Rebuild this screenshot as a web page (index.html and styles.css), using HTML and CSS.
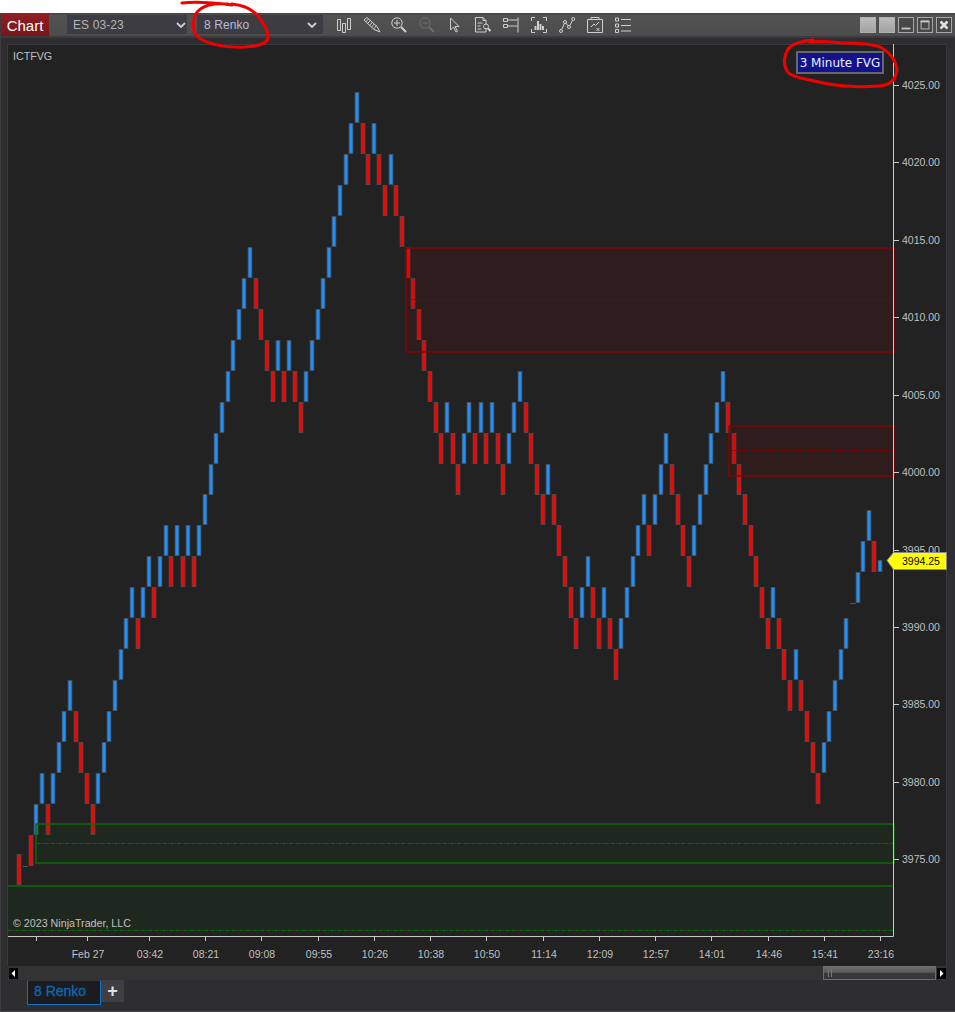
FILE: index.html
```html
<!DOCTYPE html>
<html lang="en">
<head>
<meta charset="utf-8">
<title>Chart</title>
<link rel="stylesheet" href="styles.css">
</head>
<body>
<div class="page">
  <div class="window">
    <header class="toolbar">
      <div class="title">Chart</div>
      <div class="combo combo-instrument"><span>ES 03-23</span><svg class="chev" viewBox="0 0 10 6"><path d="M1 1l4 4 4-4"/></svg></div>
      <div class="combo combo-period"><span>8 Renko</span><svg class="chev" viewBox="0 0 10 6"><path d="M1 1l4 4 4-4"/></svg></div>
      <div class="tools">
        <svg class="tool" viewBox="0 0 16 16"><path d="M1.500 2.500h3v11h-3zM6.500 6.500h3v9h-3zM11.500 1.500h3v11h-3z"/></svg>
        <svg class="tool tool-wide" viewBox="0 0 18 16"><path d="M1 3l3-2.500 10 9 3 5.500-6-2.500zM2.500 5l3-3M4.500 6.500l3-3M6.500 8.300l3-3M8.500 10l3-3M10.500 11.800l3-3"/></svg>
        <svg class="tool" viewBox="0 0 16 16"><circle cx="6" cy="6" r="5.200"/><path d="M6 3v6M3 6h6"/><path class="thick" d="M10 10l5 5"/></svg>
        <svg class="tool dim" viewBox="0 0 16 16"><circle cx="6" cy="6" r="5.200"/><path d="M3 6h6"/><path class="thick" d="M10 10l5 5"/></svg>
        <svg class="tool" viewBox="0 0 16 16"><path d="M3.500 1v12l3-3 2.500 5 1.500-.8-2.500-4.700h4z"/></svg>
        <svg class="tool" viewBox="0 0 16 16"><path d="M11 11v4H.5V.5H8l3 3V7M8 .5v3h3M2.500 6h5M2.500 9h3M2.500 12h4"/><circle cx="11" cy="9.500" r="2.500"/><path class="thick" d="M13 11.500l2.500 2.500"/></svg>
        <svg class="tool" viewBox="0 0 16 16"><path d="M.5 1.500h4v3h-4zM.5 7.500h4v3h-4zM4.500 3h10M4.500 9h10M15 .5v15"/></svg>
        <svg class="tool" viewBox="0 0 16 16"><path d="M.5 4V.5H4M12 .5h3.500V4M.5 12v3.500H4M12 15.500h3.500V12"/><path class="thick" d="M4.500 13V9M7 13V4M9.500 13V7M12 13V9"/></svg>
        <svg class="tool" viewBox="0 0 16 16"><circle cx="2" cy="14" r="1.500"/><circle cx="6" cy="5" r="1.500"/><circle cx="10" cy="10" r="1.500"/><circle cx="14.200" cy="2" r="1.500"/><path d="M2.700 12.600l2.700-6.200M7 6.200l2.200 2.600M10.800 8.700l2.700-5.300"/></svg>
        <svg class="tool" viewBox="0 0 16 16"><path d="M.5 2.500h15v13H.5zM4 2.500V.5h8v2M4 10l3-3 1.500 1.500L12 5M9.500 11l3 3M12.500 11l-3 3"/></svg>
        <svg class="tool" viewBox="0 0 16 16"><path d="M.5 1h3v3h-3zM.5 7h3v3h-3zM.5 12.500h3v3h-3zM6 2.500h10M6 8.500h10M6 14h10"/></svg>
      </div>
      <div class="win-buttons">
        <div class="win-btn win-blank"></div>
        <div class="win-btn win-blank"></div>
        <div class="win-btn"><svg viewBox="0 0 16 16"><path class="solid" d="M3 11h10v2H3z"/></svg></div>
        <div class="win-btn"><svg viewBox="0 0 16 16"><path class="line" d="M3.500 3.500h9v9h-9z"/><path class="solid" d="M3 3h10v2H3z"/></svg></div>
        <div class="win-btn"><svg viewBox="0 0 16 16"><path class="cross" d="M4 4l8 8M12 4l-8 8"/></svg></div>
      </div>
    </header>

    <main class="panel">
      <div class="chart">
        <svg class="plot" viewBox="8 44 939 922" width="939" height="922">
          <g id="bars"></g>

          <rect class="zone red" x="406" y="248" width="488" height="104"/>
          <path class="mid red" d="M407 299.500H893"/>
          <rect class="zone red" x="729" y="426" width="165" height="50"/>
          <path class="mid red" d="M730 450.500H893"/>
          <rect class="zone green" x="36" y="824" width="858" height="39"/>
          <path class="mid green" d="M37 843.500H893"/>
          <rect class="zone-fill green" x="8" y="886" width="885" height="44"/>
          <path class="edge green" d="M8 886H893"/>
          <path class="mid green" d="M8 930.500H893"/>

          <text class="label" x="13" y="60">ICTFVG</text>
          <text class="label" x="13" y="927">© 2023 NinjaTrader, LLC</text>

          <path class="axis" d="M893.500 44V936.500H8"/>
          <g class="ticks">
            <path d="M894 85.500h5M894 162.500h5M894 240.500h5M894 317.500h5M894 395.500h5M894 472.500h5M894 550.500h5M894 627.500h5M894 704.500h5M894 782.500h5M894 859.500h5"/>
            <path d="M36.500 937v4M87.500 937v4M149.500 937v4M205.500 937v4M261.500 937v4M318.500 937v4M374.500 937v4M430.500 937v4M486.500 937v4M543.500 937v4M599.500 937v4M655.500 937v4M711.500 937v4M768.500 937v4M824.500 937v4M880.500 937v4"/>
          </g>
          <g class="price-labels">
            <text x="902" y="89">4025.00</text>
            <text x="902" y="166">4020.00</text>
            <text x="902" y="244">4015.00</text>
            <text x="902" y="321">4010.00</text>
            <text x="902" y="399">4005.00</text>
            <text x="902" y="476">4000.00</text>
            <text x="902" y="554">3995.00</text>
            <text x="902" y="631">3990.00</text>
            <text x="902" y="708">3985.00</text>
            <text x="902" y="786">3980.00</text>
            <text x="902" y="863">3975.00</text>
          </g>
          <g class="time-labels">
            <text x="88" y="958">Feb 27</text>
            <text x="150" y="958">03:42</text>
            <text x="206" y="958">08:21</text>
            <text x="262" y="958">09:08</text>
            <text x="319" y="958">09:55</text>
            <text x="375" y="958">10:26</text>
            <text x="431" y="958">10:38</text>
            <text x="487" y="958">10:50</text>
            <text x="544" y="958">11:14</text>
            <text x="600" y="958">12:09</text>
            <text x="656" y="958">12:57</text>
            <text x="712" y="958">14:01</text>
            <text x="769" y="958">14:46</text>
            <text x="825" y="958">15:41</text>
            <text x="881" y="958">23:16</text>
          </g>
          <polygon class="marker" points="887,560.500 893.500,552.500 946.500,552.500 946.500,569.500 893.500,569.500"/>
          <text class="marker-text" x="902" y="565">3994.25</text>
        </svg>
        <div class="fvg-label">3 Minute FVG</div>
      </div>
      <div class="scrollbar">
        <div class="scroll-btn"><svg viewBox="0 0 9 11"><path d="M6 2v7L2.500 5.500z"/></svg></div>
        <div class="scroll-track"><div class="scroll-thumb"><span></span><span></span></div></div>
        <div class="scroll-btn"><svg viewBox="0 0 9 11"><path d="M3 2v7l3.500-3.500z"/></svg></div>
      </div>
    </main>

    <nav class="tabs">
      <div class="tab">8 Renko</div>
      <div class="tab-add">+</div>
    </nav>
  </div>

  <svg class="scribble" viewBox="0 0 955 1012" width="955" height="1012">
    <path d="M182 3C198 1 216 3 232 5M228 4C212 3 204 5 197 12C192 20 192 30 197 36C205 44 225 48 245 47C258 46 267 44 268 38C268 28 262 22 258 16C252 9 242 5 232 4"/>
    <path d="M810 42C825 40 835 43 843 43C860 43 875 44 882 48C892 54 896 62 897 70C896 78 892 83 885 85C875 87 860 87 845 86C830 85 818 82 810 80C800 78 790 76 787 71C783 64 784 55 788 49C793 43 802 41 813 40"/>
  </svg>
</div>
<script src="chart.js"></script>
</body>
</html>
```
FILE: styles.css
```css
html, body {
  margin: 0;
  padding: 0;
  background: #fff;
}

.page {
  position: relative;
  width: 955px;
  height: 1012px;
  padding-top: 13px;
  box-sizing: border-box;
  overflow: hidden;
  font-family: "Liberation Sans", Arial, sans-serif;
}

.window {
  height: 999px;
  display: flex;
  flex-direction: column;
  background: #2e2e30;
  border-left: 1px solid #3d3d3f;
  border-bottom: 1px solid #454547;
  box-sizing: border-box;
}

/* toolbar */
.toolbar {
  height: 25px;
  flex: none;
  display: flex;
  align-items: center;
  background: linear-gradient(#3f3f3f 0, #525252 2px, #4c4c4c 100%);
  border-bottom: 2px solid #3b3b3d;
  box-sizing: border-box;
}

.title {
  width: 48px;
  height: 22px;
  line-height: 23px;
  text-align: center;
  color: #fff;
  font-size: 15px;
  background: linear-gradient(#8d1e24, #7a1519);
}

.combo {
  height: 19px;
  display: flex;
  align-items: center;
  justify-content: space-between;
  box-sizing: border-box;
  background: #3c3c42;
  color: #b4b4b4;
  font-size: 12px;
  letter-spacing: .1px;
}

.combo-instrument {
  width: 120px;
  margin-left: 18px;
  padding: 0 1px 0 6px;
}

.combo-period {
  width: 126px;
  margin-left: 10px;
  padding: 0 6px 0 7px;
  color: #b9bcd6;
}

.chev {
  width: 10px;
  height: 6px;
  fill: none;
  stroke: #d0d0d0;
  stroke-width: 1.800;
}

.tools {
  display: flex;
  align-items: center;
  margin-left: 13px;
  gap: 12px;
}

.tool {
  width: 16px;
  height: 16px;
  fill: none;
  stroke: #cfcfcf;
  stroke-width: 1;
  flex: none;
}

.tool-wide {
  width: 18px;
  margin: 0 -2px 0 -1px;
}

.tool .thick {
  stroke-width: 2;
}

.tool.dim {
  stroke: #6c6c6c;
}

.win-buttons {
  display: flex;
  gap: 3px;
  margin-left: auto;
  margin-right: 3px;
}

.win-btn {
  width: 16px;
  height: 16px;
  box-sizing: border-box;
  border: 1px solid #a8a8a8;
  background: #484848;
}

.win-btn svg {
  display: block;
  width: 14px;
  height: 14px;
}

.win-blank {
  background: linear-gradient(#bcbcbc, #a2a2a2);
  border-color: #b0b0b0;
}

.solid { fill: #c8c8c8; }
.line { fill: none; stroke: #c8c8c8; stroke-width: 1; }
.cross { fill: none; stroke: #e0e0e0; stroke-width: 3; }

/* chart */
.panel {
  flex: none;
  padding: 6px 8px 0 7px;
}

.chart {
  position: relative;
  height: 922px;
  background: #222;
  box-shadow: inset 0 1px #3a3a3e, inset -1px 0 #3a3a3e, -1px 0 #3a3a3e;
}

.plot {
  display: block;
}

.zone { stroke-width: 1.500; }
.zone.red { fill: rgba(139, 0, 0, .13); stroke: #850303; }
.zone.green { fill: rgba(0, 100, 0, .1); stroke: #0a6a0a; }
.zone-fill.green { fill: rgba(0, 100, 0, .1); }
.edge.green { stroke: #0a6a0a; stroke-width: 1.500; fill: none; }
.mid { fill: none; stroke-width: 1; stroke-dasharray: 4 1 1 1; }
.mid.red { stroke: #7a0404; }
.mid.green { stroke: #0a6a0a; }

.bar { stroke: #505050; stroke-width: .8; }
.bar-up { fill: #1e90ff; }
.bar-down { fill: #f00; }
.doji { stroke: #555; stroke-width: 1; fill: none; }

.axis { fill: none; stroke: #c8c8c8; stroke-width: 1; }
.ticks path { fill: none; stroke: #c8c8c8; stroke-width: 1; }

.label,
.price-labels text,
.time-labels text {
  font-family: "Liberation Sans", Arial, sans-serif;
  font-size: 10.500px;
  fill: #c0c0c0;
}

.label {
  font-size: 10.700px;
}

.time-labels text {
  text-anchor: middle;
}

.marker {
  fill: #ff0;
  stroke: #8a8a8a;
  stroke-width: 1;
}

.marker-text {
  font-family: "Liberation Sans", Arial, sans-serif;
  font-size: 10.500px;
  fill: #000;
}

.fvg-label {
  position: absolute;
  left: 788px;
  top: 7px;
  width: 88px;
  height: 23px;
  box-sizing: border-box;
  border: 2px solid #666;
  background: #12128c;
  color: #ecedfa;
  font-family: "DejaVu Sans", sans-serif;
  font-size: 12px;
  line-height: 21px;
  text-align: center;
  white-space: nowrap;
}

/* scrollbar */
.scrollbar {
  height: 14px;
  display: flex;
  align-items: stretch;
  background: #333;
  box-sizing: border-box;
  padding: 2px 1px 1px;
}

.scroll-btn {
  width: 9px;
  flex: none;
  background: #000;
}

.scroll-btn svg {
  display: block;
  width: 9px;
  height: 11px;
  fill: #fff;
}

.scroll-track {
  flex: 1;
  display: flex;
  justify-content: flex-end;
  margin-top: -2px;
  margin-bottom: -1px;
}

.scroll-thumb {
  width: 113px;
  box-sizing: border-box;
  border: 1px solid #6e6e6e;
  background: linear-gradient(#6a6a6a, #5a5a5a 45%, #3a3a3a 50%, #353535);
  display: flex;
  align-items: center;
  gap: 2px;
  padding-left: 4px;
  margin-right: 1px;
}

.scroll-thumb span {
  width: 1px;
  height: 8px;
  background: #777;
}

/* tabs */
.tabs {
  display: flex;
  align-items: flex-start;
  padding-left: 26px;
  flex: none;
}

.tab {
  width: 74px;
  height: 25px;
  box-sizing: border-box;
  border: 1px solid #0a74cc;
  border-top-color: #333;
  background: #1c1c1e;
  color: #0a69ba;
  font-size: 14px;
  font-weight: 400;
  -webkit-text-stroke: .3px #0a69ba;
  line-height: 21px;
  padding-left: 6px;
}

.tab-add {
  width: 23px;
  height: 22px;
  background: #3e3e44;
  color: #e0e0e0;
  font-size: 18px;
  font-weight: 700;
  line-height: 22px;
  text-align: center;
}

/* red hand drawn marks */
.scribble {
  position: absolute;
  left: 0;
  top: 0;
  pointer-events: none;
  fill: none;
  stroke: #f20000;
  stroke-width: 3;
  stroke-linecap: round;
}
```
FILE: chart.js
```js
(function () {
  var NS = 'http://www.w3.org/2000/svg';
  var group = document.getElementById('bars');
  var BRICK = 31;

  // index 2 onward: u/d + brick level, each bar sits one slot to the right
  var SERIES = 'd24 u23 u22 d23 u22 u21 u20 u19 d20 d21 d22 d23 u22 u21 u20 u19 u18 u17 u16 d17 u16 u15 d16 u15 u14 d15 u14 d15 u14 d15 u14 u13 u12 u11 u10 u9 u8 u7 u6 u5 d6 d7 d8 d9 u8 d9 u8 d9 d10 u9 u8 u7 u6 u5 u4 u3 u2 u1 u0 d1 d2 u1 d2 d3 u2 d3 d4 d5 d6 d7 d8 d9 d10 d11 u10 d11 d12 u11 u10 d11 u10 d11 u10 d11 d12 u11 u10 u9 d10 d11 d12 d13 u12 d13 d14 d15 d16 d17 u16 u15 d16 d17 u16 d17 d18 u17 u16 u15 u14 u13 d14 u13 u12 u11 d12 d13 d14 d15 u14 u13 u12 u11 u10 u9 d10 d11 d12 d13 d14 d15 d16 d17 u16 d17 d18 d19 u18 d19 d20 d21 d22 u21 u20 u19 u18 u17'.split(' ');

  function slotX(i) {
    return Math.floor(19.99 + 5.625 * i);
  }

  function levelY(k) {
    return Math.round(92 + 30.96 * k);
  }

  // fill 3px wide, centred, with a soft grey edge either side
  function addBar(i, up, top, height) {
    var r = document.createElementNS(NS, 'rect');
    r.setAttribute('class', 'bar ' + (up ? 'bar-up' : 'bar-down'));
    r.setAttribute('x', slotX(i) - 1.9);
    r.setAttribute('y', top + 0.4);
    r.setAttribute('width', 3.8);
    r.setAttribute('height', height - 0.8);
    group.appendChild(r);
  }

  function addDoji(x1, x2, y) {
    var p = document.createElementNS(NS, 'path');
    p.setAttribute('class', 'doji');
    p.setAttribute('d', 'M' + x1 + ' ' + (y + 0.5) + 'H' + x2);
    group.appendChild(p);
  }

  addBar(0, false, 854, BRICK);
  addDoji(23, 28, 866);

  SERIES.forEach(function (token, n) {
    addBar(n + 2, token.charAt(0) === 'u', levelY(+token.slice(1)), BRICK);
  });

  addDoji(850, 856, 603);
  addBar(149, true, 572, BRICK);
  addBar(150, true, 541, BRICK);
  addBar(151, true, 510, BRICK);
  addBar(152, false, 541, BRICK);
  addBar(153, true, 560, 12);
})();
```
